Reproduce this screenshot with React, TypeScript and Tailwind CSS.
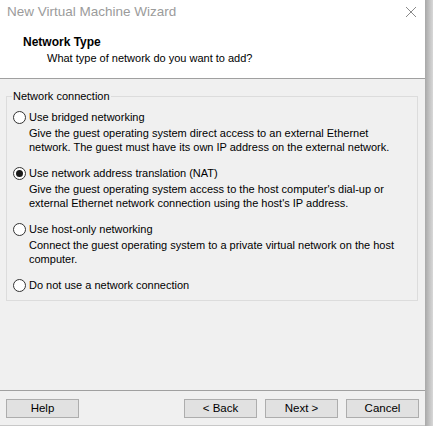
import React from 'react';

interface NetOption {
  id: string;
  label: string;
  lines: string[];
}

const options: NetOption[] = [
  {
    id: 'bridged',
    label: 'Use bridged networking',
    lines: [
      'Give the guest operating system direct access to an external Ethernet',
      'network. The guest must have its own IP address on the external network.',
    ],
  },
  {
    id: 'nat',
    label: 'Use network address translation (NAT)',
    lines: [
      "Give the guest operating system access to the host computer's dial-up or",
      "external Ethernet network connection using the host's IP address.",
    ],
  },
  {
    id: 'hostonly',
    label: 'Use host-only networking',
    lines: [
      'Connect the guest operating system to a private virtual network on the host',
      'computer.',
    ],
  },
  {
    id: 'none',
    label: 'Do not use a network connection',
    lines: [],
  },
];

const Radio: React.FC<{ checked: boolean }> = ({ checked }) => (
  <span className="w-[13px] h-[13px] rounded-full border border-[#333333] bg-white flex items-center justify-center shrink-0">
    {checked && <span className="w-[7px] h-[7px] rounded-full bg-[#1a1a1a]" />}
  </span>
);

const WizButton: React.FC<{ label: string }> = ({ label }) => (
  <button className="w-[73px] h-[19px] border border-[#adadad] bg-[#e1e1e1] text-[11.5px] leading-[17px] text-black">
    {label}
  </button>
);

export default function App() {
  const selected = 'nat';

  return (
    <div
      className="w-[433px] h-[435px] bg-white flex items-start text-black"
      style={{ fontFamily: '"Liberation Sans", Arial, sans-serif' }}
    >
      {/* ウィンドウ本体 */}
      <div className="w-[425px] h-[426px] flex flex-col bg-[#f0f0f0] border-b border-[#c8c8c8]">
        {/* ヘッダー */}
        <div className="h-[79px] bg-white border-b border-[#a0a0a0] flex flex-col">
          <div className="h-[24px] flex items-center justify-between pl-[7px] pr-[8px]">
            <span className="text-[13.5px] text-[#9b9b9b]">New Virtual Machine Wizard</span>
            <svg width="12" height="12" viewBox="0 0 12 12" className="text-[#8a8a8a]">
              <path d="M1 1L11 11M11 1L1 11" stroke="currentColor" strokeWidth="1" fill="none" />
            </svg>
          </div>
          <div className="pl-[23px] mt-[11px] text-[12px] leading-[14px] font-bold">Network Type</div>
          <div className="pl-[47px] mt-[2px] text-[11px] leading-[14px]">What type of network do you want to add?</div>
        </div>

        {/* 内容 */}
        <div className="flex-1 flex flex-col">
          <fieldset className="ml-[6px] mt-[10px] w-[412px] h-[212px] border border-[#dcdcdc] p-0 m-0 text-[11px]">
            <legend className="ml-[5px] px-[1px] leading-[14px]">Network connection</legend>
            <div className="flex flex-col pl-[6px] pt-[7px]">
              {options.map((opt, i) => (
                <div key={opt.id} className={i > 0 ? 'mt-[12px]' : ''}>
                  <div className="flex items-center gap-[3px] h-[14px]">
                    <Radio checked={opt.id === selected} />
                    <span className="leading-[14px]">{opt.label}</span>
                  </div>
                  {opt.lines.length > 0 && (
                    <div className="pl-[16px] mt-[2px]">
                      {opt.lines.map((l) => (
                        <div key={l} className="leading-[14px] whitespace-nowrap">{l}</div>
                      ))}
                    </div>
                  )}
                </div>
              ))}
            </div>
          </fieldset>

          <div className="mt-auto border-t border-[#a0a0a0] h-[35px] flex items-start pt-[8px] pl-[6px] pr-[6px]">
            <WizButton label="Help" />
            <div className="flex-1" />
            <div className="flex gap-[8px]">
              <WizButton label="< Back" />
              <WizButton label="Next >" />
              <WizButton label="Cancel" />
            </div>
          </div>
        </div>
      </div>

      {/* 影 */}
      <div className="w-[8px] h-[426px] bg-gradient-to-r from-[#a8a8a8] to-[#d8d8d8]" />
    </div>
  );
}
